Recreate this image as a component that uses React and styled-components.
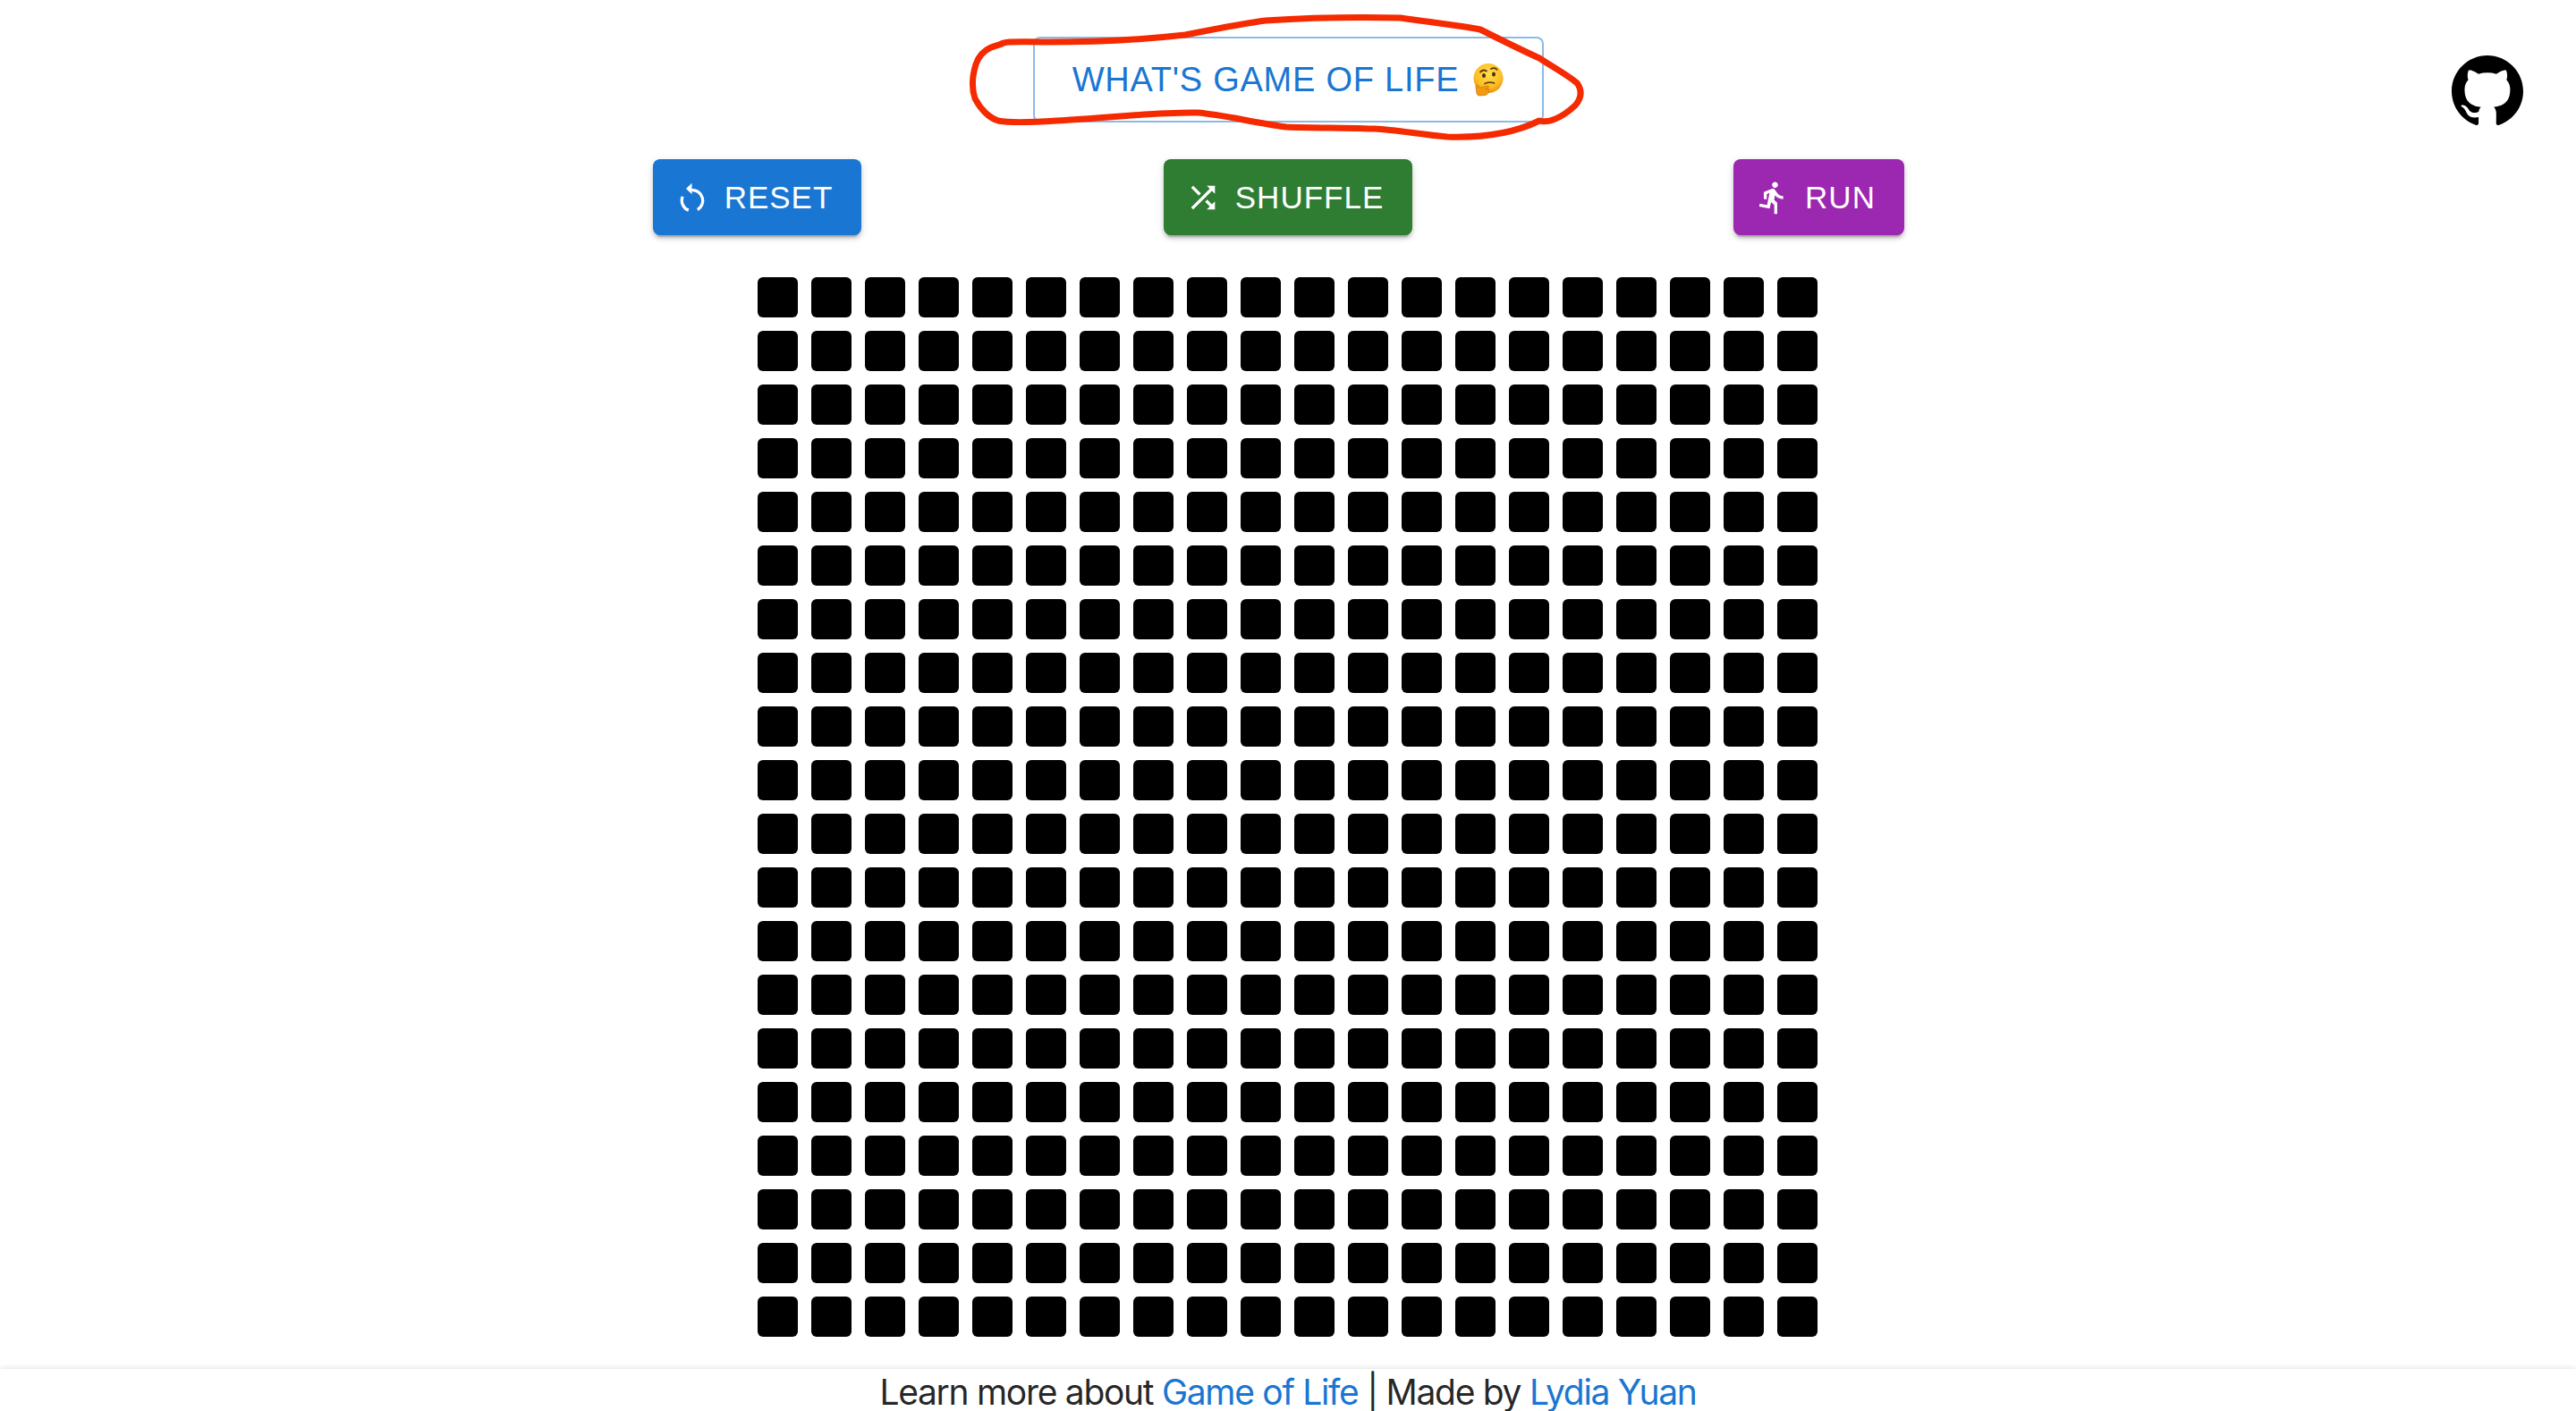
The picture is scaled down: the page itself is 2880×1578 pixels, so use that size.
import React from "react";
import styled, { createGlobalStyle } from "styled-components";

const GlobalStyle = createGlobalStyle`
  html, body {
    margin: 0;
    padding: 0;
    background: #fff;
    overflow: hidden;
  }
`;

const Page = styled.div`
  width: 2880px;
  height: 1578px;
  display: flex;
  flex-direction: column;
  font-family: "Liberation Sans", Arial, sans-serif;
`;

const Header = styled.header`
  display: grid;
  grid-template-columns: 1fr auto 1fr;
  height: 137px;
  padding-top: 41px;
  box-sizing: border-box;
`;

const TitleWrap = styled.div`
  grid-column: 2;
  position: relative;
  height: 96px;
`;

const TitleButton = styled.button`
  width: 571px;
  height: 96px;
  box-sizing: border-box;
  display: flex;
  align-items: center;
  justify-content: center;
  gap: 15px;
  background: #fff;
  border: 2px solid rgba(25, 118, 210, 0.5);
  border-radius: 8px;
  color: #1976d2;
  font-family: inherit;
  font-size: 38px;
  letter-spacing: 0.75px;
  padding: 0;
`;

const Scribble = styled.svg`
  position: absolute;
  left: -74px;
  top: -31px;
  pointer-events: none;
`;

const GithubLink = styled.a`
  grid-column: 3;
  justify-self: end;
  margin: 20px 59px 0 0;
  width: 80px;
  height: 80px;
  color: #000;
`;

const Actions = styled.div`
  display: grid;
  grid-template-columns: repeat(3, 593.5px);
  justify-content: center;
  justify-items: center;
  margin-top: 41px;
`;

const ActionButton = styled.button`
  height: 85px;
  display: flex;
  align-items: center;
  padding: 0 32px;
  border: 0;
  border-radius: 8px;
  background: ${(props) => props.$color};
  color: #fff;
  font-family: inherit;
  font-size: 35px;
  letter-spacing: 1px;
  box-shadow: 0 6px 2px -4px rgba(0, 0, 0, 0.2), 0 4px 4px 0 rgba(0, 0, 0, 0.14),
    0 2px 10px 0 rgba(0, 0, 0, 0.12);

  svg {
    width: 40px;
    height: 40px;
    margin: 0 16px 0 -8px;
    fill: currentColor;
  }
`;

const Board = styled.div`
  display: grid;
  grid-template-columns: repeat(20, 45px);
  grid-auto-rows: 45px;
  gap: 15px;
  justify-content: center;
  margin-top: 47px;
  padding-right: 1px;
`;

const Cell = styled.div`
  background: #000;
  border-radius: 6px;
`;

const Footer = styled.footer`
  margin-top: 36px;
  flex: 1;
  display: flex;
  justify-content: center;
  align-items: center;
  padding-top: 2px;
  background: #fff;
  box-shadow: 0 -1px 6px rgba(0, 0, 0, 0.12);
  color: rgba(0, 0, 0, 0.87);
  font-family: Inter, "Liberation Sans", sans-serif;
  font-size: 39px;
  letter-spacing: -1.3px;
  white-space: pre;
`;

const FooterLink = styled.a`
  color: #1976d2;
  text-decoration: none;
`;

const ThinkingFace = () => (
  <svg width="35" height="37" viewBox="0 0 35 37">
    <defs>
      <radialGradient id="face" cx="50%" cy="35%" r="65%">
        <stop offset="0%" stopColor="#ffdf4f" />
        <stop offset="70%" stopColor="#fdbd22" />
        <stop offset="100%" stopColor="#ee8f12" />
      </radialGradient>
    </defs>
    <circle cx="18" cy="16.5" r="16.5" fill="url(#face)" />
    <path d="M9 9.5c2-2 5-2.4 7-1" fill="none" stroke="#5b3a14" strokeWidth="1.8" strokeLinecap="round" />
    <path d="M21 6c2.200-1.400 5-1 6.500.8" fill="none" stroke="#5b3a14" strokeWidth="1.8" strokeLinecap="round" />
    <ellipse cx="13" cy="13.500" rx="2" ry="2.600" fill="#4a2f10" />
    <ellipse cx="24" cy="12" rx="2" ry="2.600" fill="#4a2f10" />
    <path d="M14 22.500c3-1.400 7-1.700 10.500-.6" fill="none" stroke="#6b4315" strokeWidth="1.800" strokeLinecap="round" />
    <path
      d="M8 36c-2 0-3-1.500-3.200-4l-.8-6c-.3-2 2-2.800 2.800-1l1.400 2.400 8.500-2.400c1.800-.4 2.500 1.800.8 2.500l-3 1.200 3.200-.2c1.400 0 1.500 2 .2 2.300l.2 1.700c-.4 1.500-2 2.700-4 3z"
      fill="#f29a12"
      stroke="#d0780a"
      strokeWidth="0.8"
    />
  </svg>
);

const cells = Array.from({ length: 400 }, (_, i) => i);

const App = () => {
  return (
    <Page>
      <GlobalStyle />
      <Header>
        <TitleWrap>
          <TitleButton>
            <span>WHAT'S GAME OF LIFE</span>
            <ThinkingFace />
          </TitleButton>
          <Scribble width="700" height="150" viewBox="0 0 700 150">
            <path
              d="M41 38 C48 36 60 37 90 37 C140 37 200 34 244 29 C280 22 310 16 334 13 C380 10 440 9 485 10 C520 15 555 19 574 23 C600 36 620 46 640 55 C660 68 678 78 683 84 C688 92 687 100 680 108 C665 122 650 128 640 125 C610 140 570 144 537 143 C510 141 480 135 456 134 C420 133 385 133 357 132 C320 127 285 118 258 116 C210 115 160 122 100 125 C70 127 45 127 35 125 C25 122 15 112 9 100 C5 88 6 75 10 62 C13 53 18 47 27 43 C32 41 37 40 41 38 Z"
              fill="none"
              stroke="#f52a00"
              strokeWidth="7"
              strokeLinejoin="round"
            />
          </Scribble>
        </TitleWrap>
        <GithubLink href="#">
          <svg width="80" height="80" viewBox="0 0 24 24" fill="currentColor">
            <path d="M12 .297c-6.630 0-12 5.373-12 12 0 5.303 3.438 9.800 8.205 11.385.6.113.82-.258.82-.628 0-.285-.01-1.040-.015-2.040-3.338.724-4.042-1.610-4.042-1.610C4.422 18.070 3.633 17.700 3.633 17.700c-1.087-.744.084-.729.084-.729 1.205.084 1.838 1.236 1.838 1.236 1.070 1.835 2.809 1.305 3.495.998.108-.776.417-1.305.76-1.605-2.665-.3-5.466-1.332-5.466-5.930 0-1.310.465-2.380 1.235-3.220-.135-.303-.54-1.523.105-3.176 0 0 1.005-.322 3.300 1.230.96-.267 1.980-.399 3-.405 1.020.006 2.040.138 3 .405 2.280-1.552 3.285-1.230 3.285-1.230.645 1.653.24 2.873.12 3.176.765.84 1.230 1.910 1.230 3.220 0 4.610-2.805 5.625-5.475 5.920.42.36.81 1.096.81 2.220 0 1.606-.015 2.896-.015 3.286 0 .315.21.69.825.57C20.565 22.092 24 17.592 24 12.297c0-6.627-5.373-12-12-12" />
          </svg>
        </GithubLink>
      </Header>
      <Actions>
        <ActionButton $color="#1976d2">
          <svg viewBox="0 0 24 24">
            <path d="M11.700 2.300L7.800 6l3.900 3.700z" />
            <g fill="none" stroke="currentColor" strokeWidth="2">
              <path d="M11.500 7A7 7 0 0 1 15.500 20.060" />
              <path d="M9.500 20.500A7 7 0 0 1 5.500 11.300" />
            </g>
          </svg>
          RESET
        </ActionButton>
        <ActionButton $color="#2e7d32">
          <svg viewBox="0 0 24 24">
            <path d="M10.590 9.170L5.410 4 4 5.410l5.170 5.170 1.420-1.410zM14.500 4l2.040 2.040L4 18.590 5.410 20 17.960 7.460 20 9.500V4h-5.500zm.33 9.410l-1.410 1.410 3.130 3.130L14.500 20H20v-5.500l-2.040 2.040-3.130-3.130z" />
          </svg>
          SHUFFLE
        </ActionButton>
        <ActionButton $color="#9c27b0">
          <svg viewBox="0 0 24 24">
            <path d="M13.490 5.480c1.100 0 2-.9 2-2s-.9-2-2-2-2 .9-2 2 .9 2 2 2zm-3.600 13.900l1-4.400 2.100 2v6h2v-7.500l-2.100-2 .6-3c1.300 1.500 3.300 2.500 5.500 2.500v-2c-1.900 0-3.500-1-4.300-2.400l-1-1.600c-.4-.6-1-1-1.700-1-.3 0-.5.1-.8.1l-5.200 2.200v4.700h2v-3.400l1.800-.7-1.600 8.100-4.900-1-.4 2 7 1.400z" />
          </svg>
          RUN
        </ActionButton>
      </Actions>
      <Board>
        {cells.map((i) => (
          <Cell key={i} />
        ))}
      </Board>
      <Footer>
        Learn more about <FooterLink href="#">Game of Life</FooterLink> | Made by{" "}
        <FooterLink href="#">Lydia Yuan</FooterLink>
      </Footer>
    </Page>
  );
};

export default App;
